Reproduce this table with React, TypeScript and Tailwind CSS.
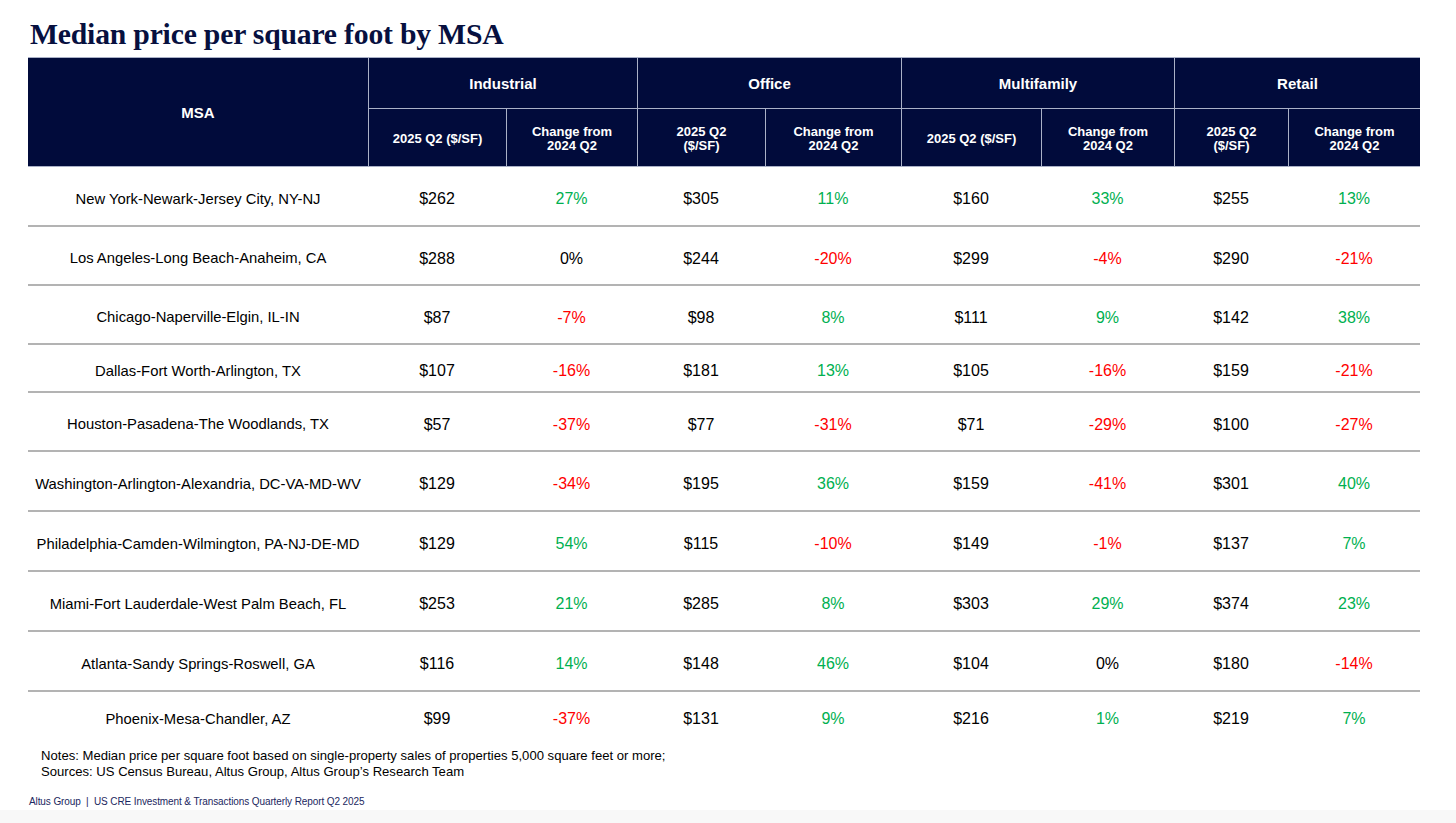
const GRID =
  "grid grid-cols-[340px_138px_131px_128px_136px_140px_133px_114px_132px]";

const groups = ["Industrial", "Office", "Multifamily", "Retail"];

// sub-header labels, line breaks as in the report
const subHeads: string[][] = [
  ["2025 Q2 ($/SF)"],
  ["Change from", "2024 Q2"],
  ["2025 Q2", "($/SF)"],
  ["Change from", "2024 Q2"],
  ["2025 Q2 ($/SF)"],
  ["Change from", "2024 Q2"],
  ["2025 Q2", "($/SF)"],
  ["Change from", "2024 Q2"],
];

type Row = { msa: string; h: string; vals: [string, number][] };

const rows: Row[] = [
  { msa: "New York-Newark-Jersey City, NY-NJ", h: "h-[60px]", vals: [["$262", 27], ["$305", 11], ["$160", 33], ["$255", 13]] },
  { msa: "Los Angeles-Long Beach-Anaheim, CA", h: "h-[59px]", vals: [["$288", 0], ["$244", -20], ["$299", -4], ["$290", -21]] },
  { msa: "Chicago-Naperville-Elgin, IL-IN", h: "h-[59px]", vals: [["$87", -7], ["$98", 8], ["$111", 9], ["$142", 38]] },
  { msa: "Dallas-Fort Worth-Arlington, TX", h: "h-[48px]", vals: [["$107", -16], ["$181", 13], ["$105", -16], ["$159", -21]] },
  { msa: "Houston-Pasadena-The Woodlands, TX", h: "h-[59px]", vals: [["$57", -37], ["$77", -31], ["$71", -29], ["$100", -27]] },
  { msa: "Washington-Arlington-Alexandria, DC-VA-MD-WV", h: "h-[60px]", vals: [["$129", -34], ["$195", 36], ["$159", -41], ["$301", 40]] },
  { msa: "Philadelphia-Camden-Wilmington, PA-NJ-DE-MD", h: "h-[60px]", vals: [["$129", 54], ["$115", -10], ["$149", -1], ["$137", 7]] },
  { msa: "Miami-Fort Lauderdale-West Palm Beach, FL", h: "h-[60px]", vals: [["$253", 21], ["$285", 8], ["$303", 29], ["$374", 23]] },
  { msa: "Atlanta-Sandy Springs-Roswell, GA", h: "h-[60px]", vals: [["$116", 14], ["$148", 46], ["$104", 0], ["$180", -14]] },
  { msa: "Phoenix-Mesa-Chandler, AZ", h: "h-[52px]", vals: [["$99", -37], ["$131", 9], ["$216", 1], ["$219", 7]] },
];

function pctColor(v: number) {
  if (v > 0) return "text-[#00b050]";
  if (v < 0) return "text-[#ff0000]";
  return "text-black";
}

export default function App() {
  return (
    <div className="w-[1456px] h-[823px] bg-white flex flex-col overflow-hidden font-['Liberation_Sans',Arial,sans-serif]">
      <h1 className="pl-[30px] pt-[17px] h-[57px] text-[29.7px] leading-[34px] font-bold text-[#07103f] font-['Liberation_Serif','Times_New_Roman',serif] tracking-[-0.2px]">
        Median price per square foot by MSA
      </h1>

      <div className="ml-[28px] w-[1392px]">
        {/* header */}
        <div className={`${GRID} grid-rows-[51px_57px] bg-[#010b3b] text-white font-bold border-t border-b border-[#aab1c7]`}>
          <div className="row-span-2 flex items-center justify-center pt-[2px] text-[15px]">MSA</div>
          {groups.map((g) => (
            <div
              key={g}
              className="col-span-2 flex items-center justify-center pt-[2px] border-l border-b border-[#aab1c7] text-[15px]"
            >
              {g}
            </div>
          ))}
          {subHeads.map((lines, i) => (
            <div
              key={i}
              className="flex flex-col items-center justify-center pt-[2px] border-l border-[#aab1c7] text-[13px] leading-[14px] text-center"
            >
              {lines.map((l) => (
                <span key={l}>{l}</span>
              ))}
            </div>
          ))}
        </div>

        {/* body */}
        {rows.map((r, i) => (
          <div
            key={r.msa}
            className={`${GRID} ${r.h} items-center text-black ${
              i < rows.length - 1 ? "pt-[6px] border-b-2 border-[#b3b3b3]" : "pt-[2px]"
            }`}
          >
            <div className="text-center text-[14.8px]">{r.msa}</div>
            {r.vals.map(([price, pct], j) => (
              <div key={j} className="contents">
                <div className="text-center text-[16px]">{price}</div>
                <div className={`text-center text-[16px] ${pctColor(pct)}`}>{pct}%</div>
              </div>
            ))}
          </div>
        ))}
      </div>

      <div className="pl-[41px] pt-[4px] text-[13.1px] leading-[16px] text-black">
        <p>Notes: Median price per square foot based on single-property sales of properties 5,000 square feet or more;</p>
        <p>Sources: US Census Bureau, Altus Group, Altus Group’s Research Team</p>
      </div>

      <div className="pl-[29px] pt-[15px] text-[10px] leading-[14px] tracking-[-0.1px] text-[#1b2760]">
        Altus Group&nbsp; |&nbsp; US CRE Investment &amp; Transactions Quarterly Report Q2 2025
      </div>

      <div className="mt-auto h-[13px] bg-[#f8f8f8]" />
    </div>
  );
}
